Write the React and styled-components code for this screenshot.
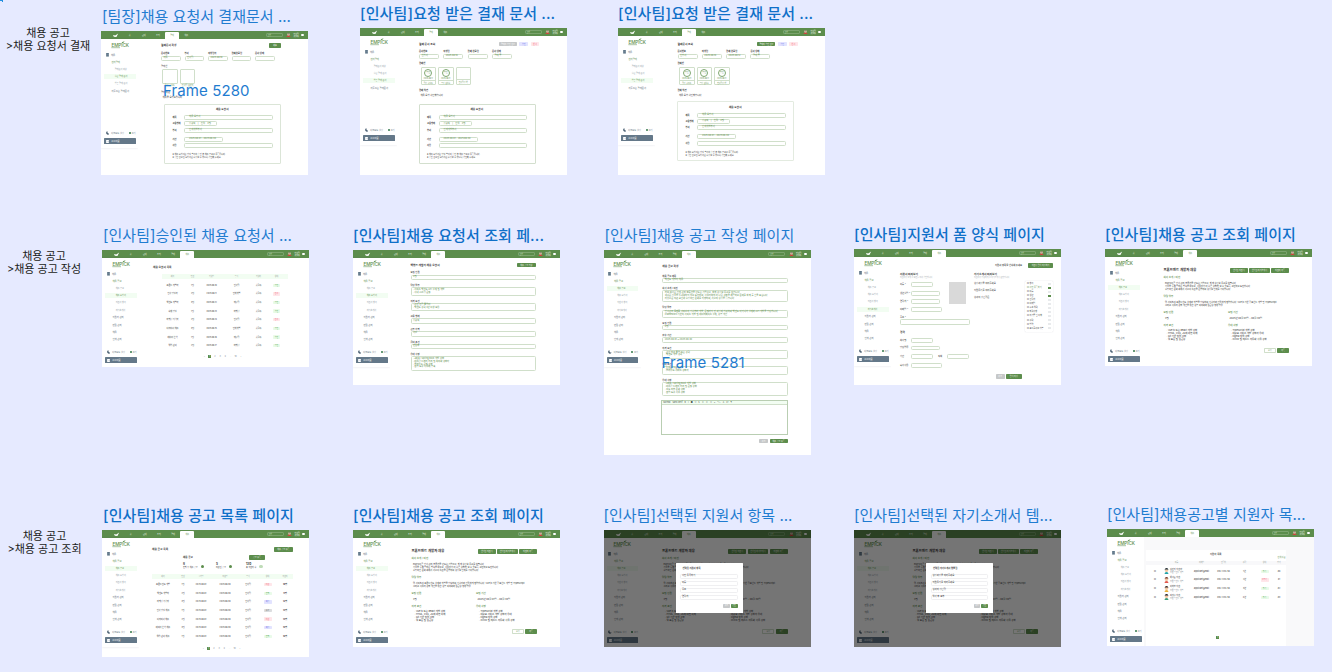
import React from "react";
import styled, { createGlobalStyle, css } from "styled-components";

const GREEN = "#5c8d4c";
const LINE = "#d0dfca";
const MINT = "#f2fdf2";

const GlobalStyle = createGlobalStyle`
  * { box-sizing: border-box; }
  html, body { margin: 0; padding: 0; }
  body { font-family: Inter, "Noto Sans CJK KR", sans-serif; overflow: hidden; -webkit-text-size-adjust: none; }
`;

/* ---------- canvas ---------- */
const Canvas = styled.main`
  position: relative;
  width: 1332px;
  height: 672px;
  background: #e6eaff;
  overflow: hidden;
`;
const Corner = styled.i`
  position: absolute;
  left: 0;
  top: 0;
  width: 3px;
  height: 2px;
  border-top: 1px solid #2490e0;
  border-right: 1px solid #2490e0;
`;
const Node = styled.section`
  position: absolute;
  left: ${(p) => p.$x}px;
  top: ${(p) => p.$y - 24}px;
  width: 207px;
`;
const NodeTitle = styled.h2`
  margin: 0;
  padding-left: ${(p) => p.$pad ?? 1}px;
  height: 24px;
  line-height: 20px;
  font-size: 15px;
  letter-spacing: ${(p) => (p.$bold ? 0.14 : 0.03)}px;
  font-weight: ${(p) => (p.$bold ? 500 : 400)};
  color: ${(p) => (p.$bold ? "#0f70c8" : "#1f7cd0")};
  white-space: nowrap;
`;
const FloatName = styled.span`
  position: absolute;
  left: ${(p) => p.$x}px;
  top: ${(p) => p.$y}px;
  font-size: 15px;
  line-height: 20px;
  letter-spacing: 0.1px;
  color: #1f7cd0;
`;
const GroupLabel = styled.p`
  position: absolute;
  margin: 0;
  left: ${(p) => p.$x}px;
  top: ${(p) => p.$y}px;
  width: 90px;
  text-align: center;
  font: 400 11px/13px Inter, "Noto Sans CJK KR", sans-serif;
  color: #1b1c20;
  white-space: nowrap;
`;

/* ---------- page shell ---------- */
const Page = styled.div`
  position: relative;
  width: 207px;
  height: ${(p) => p.$h}px;
  background: #fff;
  display: flex;
  flex-direction: column;
  overflow: hidden;
  font-size: 2.4px;
  color: #333;
  white-space: nowrap;
`;
const TopBar = styled.header`
  flex: none;
  height: 8px;
  background: ${GREEN};
  display: flex;
  align-items: center;
  padding: 0 4px 0 11px;
  color: #fff;
`;
const Tab = styled.span`
  width: 14.15px;
  height: 6.6px;
  align-self: flex-end;
  display: flex;
  align-items: center;
  justify-content: center;
  font-size: 2px;
  border-radius: 1px 1px 0 0;
  background: ${(p) => (p.$on ? "#fff" : "transparent")};
  color: ${(p) => (p.$on ? GREEN : "#eef5eb")};
`;
const Search = styled.span`
  margin-left: auto;
  width: 17px;
  height: 4px;
  border: 1px solid #7ba36d;
  border-radius: 1px;
  display: flex;
  align-items: center;
  padding-left: 1px;
  font-size: 1.8px;
  color: #cfe0c9;
`;
const UserName = styled.span`
  width: 10px;
  font-size: 2px;
  line-height: 2.2px;
  text-align: center;
`;
const Dot = styled.i`
  flex: none;
  width: ${(p) => p.$s}px;
  height: ${(p) => p.$s}px;
  border-radius: 50%;
  background: ${(p) => p.$c};
`;
const Main = styled.div`
  flex: 1;
  display: flex;
  min-height: 0;
`;
const Sidebar = styled.nav`
  flex: none;
  width: 37px;
  height: 109px;
  background: #fff;
  box-shadow: 0 0 2px rgba(60, 70, 110, 0.16);
  display: flex;
  flex-direction: column;
  padding: 2px 2.5px 0 3.2px;
`;
const Brand = styled.div`
  height: 10.4px;
  padding-left: 6.5px;
`;
const SideItem = styled.div`
  height: 7.25px;
  display: flex;
  align-items: center;
  padding-left: ${(p) => p.$pad}px;
  font-size: 2.3px;
  color: ${(p) => p.$c || "#5a6b78"};
  gap: 2px;
`;
const SubItem = styled.div`
  margin: 1.1px 0;
  height: 5px;
  display: flex;
  align-items: center;
  padding-left: 10.5px;
  font-size: 2.1px;
  color: ${(p) => (p.$on ? GREEN : "#8d98a3")};
  background: ${(p) => (p.$on ? MINT : "transparent")};
`;
const ThemeRow = styled.div`
  margin-top: auto;
  height: 5px;
  display: flex;
  align-items: center;
  gap: 2px;
  padding-left: 1.5px;
  color: #6b7b87;
  font-size: 2.2px;
`;
const Toggle = styled.span`
  margin-left: auto;
  display: flex;
  align-items: center;
  gap: 0.8px;
`;
const Logout = styled.div`
  margin: 2.7px 0 3.6px;
  height: 6px;
  background: #647889;
  border-radius: 0.6px;
  display: flex;
  align-items: center;
  gap: 2px;
  padding-left: 2px;
  color: #fff;
  font-size: 2.3px;
`;
const Content = styled.article`
  flex: 1;
  min-width: 0;
  padding: ${(p) => p.$p};
  background: ${(p) => p.$bg || "#fff"};
  display: flex;
  flex-direction: column;
`;

/* ---------- parts ---------- */
const Row = styled.div`
  flex: none;
  display: flex;
  align-items: center;
  height: ${(p) => (p.$h ? `${p.$h}px` : "auto")};
  margin-top: ${(p) => p.$mt || 0}px;
  gap: ${(p) => p.$gap || 0}px;
  padding-left: ${(p) => p.$pl || 0}px;
  justify-content: ${(p) => p.$j || "flex-start"};
`;
const Spacer = styled.i`
  flex: 1;
`;
const Text = styled.div`
  flex: none;
  font-size: ${(p) => p.$s || 2.4}px;
  line-height: ${(p) => p.$lh || 3}px;
  font-weight: ${(p) => p.$w || 400};
  color: ${(p) => p.$c || "#333"};
  width: ${(p) => (p.$width ? `${p.$width}px` : "auto")};
  margin-top: ${(p) => p.$mt || 0}px;
  padding-left: ${(p) => p.$pl || 0}px;
  text-align: ${(p) => p.$a || "left"};
`;
const tones = {
  green: css`background: ${GREEN}; color: #fff;`,
  gray: css`background: #c6c8c9; color: #fff;`,
  lilac: css`background: #e2e3ff; color: #6c70e8;`,
  pink: css`background: #ffe6ea; color: #ef6a78;`,
  mint: css`background: #e9fbe9; color: #57a552;`,
  line: css`background: #fff; color: ${GREEN}; border: 1px solid ${LINE};`,
  silver: css`background: #dcdddf; color: #555;`,
};
const Button = styled.span`
  flex: none;
  width: ${(p) => p.$width}px;
  height: ${(p) => p.$h || 4.6}px;
  border-radius: 0.7px;
  display: flex;
  align-items: center;
  justify-content: center;
  font-size: 2px;
  overflow: hidden;
  ${(p) => tones[p.$tone]}
`;
const Field = styled.div`
  flex: none;
  width: ${(p) => (p.$width ? `${p.$width}px` : "100%")};
  height: ${(p) => p.$h || 5}px;
  border: 1px solid ${(p) => p.$line || LINE};
  border-radius: 1.4px;
  padding-left: ${(p) => p.$pl ?? 1.5}px;
  display: flex;
  flex-direction: column;
  justify-content: center;
  font-size: 2.3px;
  line-height: 2.8px;
  color: ${(p) => p.$c || GREEN};
  margin-top: ${(p) => p.$mt || 0}px;
`;
const Pager = styled.div`
  margin-top: ${(p) => p.$mt}px;
  display: flex;
  justify-content: center;
  align-items: center;
  gap: 2.2px;
  height: 4px;
  font-size: 2.2px;
  color: #7b8790;
  span { width: 3px; line-height: 3.2px; text-align: center; }
  .on { background: ${GREEN}; color: #fff; }
`;

const Leaf = () => (
  <svg width="7" height="5" viewBox="0 0 7 5">
    <path d="M1 2 L1.8 3.8 L4.4 4 L6.2 .5 L4 1.9 L3.2 2.5Z" fill="#fff" />
  </svg>
);
const BrandMark = () => (
  <svg width="20" height="8" viewBox="0 0 20 8">
    <text x="0.4" y="5.7" fontSize="4.6" fontWeight="500" textLength="17.5" fill={GREEN} fontFamily="Inter">EMPICK</text>
    <path d="M10.3 2.6 Q10.8 .5 13.6 .3 Q12.8 2 10.3 2.6" fill={GREEN} />
    <path d="M0.3 6.7H9" stroke={GREEN} strokeWidth=".5" />
  </svg>
);
const Moon = () => (
  <svg width="3.6" height="3.8" viewBox="0 0 4 4">
    <path d="M1.7 0A2 2 0 1 0 4 2.7A2 2 0 0 1 1.7 0Z" fill="#506577" />
  </svg>
);
const Door = ({ c }) => (
  <svg width="3" height="3.6" viewBox="0 0 3 4">
    <path d="M0 0H3V4H0Z" fill={c} />
    <path d="M1.4 1.8H3" stroke="#8ea0b0" strokeWidth=".5" />
  </svg>
);
const Avatar = () => (
  <svg width="5" height="4.4" viewBox="0 0 5 4.4">
    <circle cx="2.5" cy="1.6" r="1.3" fill="#f0cdb8" />
    <path d="M.4 4Q.5 2.4 2.5 2.5T4.6 4Z" fill="#c9463f" />
    <path d="M1.3 1.2Q2.5 -.4 3.7 1.2Z" fill="#3b3d44" />
  </svg>
);

const SHORT = ["결재문서 작성", "올린 결재 문서", "받은 결재 문서"];
const LONG = ["채용 공고", "채용 요청서", "지원서 항목", "자기소개서"];

function Shell({ h, tab = 4, menu = "long", on, pad, bg, children, overlay }) {
  const subs = menu === "short" ? SHORT : LONG;
  const rest = menu === "short" ? ["자주쓰는 결재문서"] : ["지원자 관리", "면접 관리", "채용", "인재 관리"];
  return (
    <Page $h={h}>
      <TopBar>
        <Row $h={6}><Leaf /></Row>
        <Row $pl={3.6} $h={8}>
          {["홈", "근태", "조직", "결재", "채용"].map((t, i) => (
            <Tab key={t} $on={i === tab}>{t}</Tab>
          ))}
          {tab === 3 ? null : <Spacer />}
        </Row>
        <Search>검색</Search>
        <Row $pl={3.5}><Avatar /></Row>
        <UserName>인사팀<br />홍길동</UserName>
        <Dot $s={2.8} $c="#fff" />
      </TopBar>
      <Main>
        <Sidebar>
          <Brand><BrandMark /></Brand>
          <SideItem $pad={1.8}><Door c="#61788a" />채용</SideItem>
          <SideItem $pad={7.3} $c={GREEN}>{menu === "short" ? "전자결재" : "채용 공고"}</SideItem>
          {subs.map((s, i) => <SubItem key={s} $on={i === on}>{s}</SubItem>)}
          {rest.map((s) => <SideItem key={s} $pad={7.3}>{s}</SideItem>)}
          <ThemeRow><Moon />다크모드 설정<Toggle><Dot $s={2} $c="#33794b" />끄기</Toggle></ThemeRow>
          <Logout><Door c="#fff" />로그아웃</Logout>
        </Sidebar>
        <Content $p={pad} $bg={bg}>{children}</Content>
      </Main>
      {overlay}
    </Page>
  );
}

/* ---------- approval documents ---------- */
const Meta = styled.div`
  display: grid;
  grid-template-columns: repeat(${(p) => p.$n}, ${(p) => p.$col}px);
  margin-top: ${(p) => p.$mt}px;
`;
const Sign = styled.div`
  width: 15.5px;
  height: ${(p) => p.$h}px;
  border: 1px solid ${LINE};
  border-radius: 1px;
  display: flex;
  flex-direction: column;
  align-items: center;
  font-size: 1.9px;
  line-height: 2.6px;
  color: ${GREEN};
`;
const Stamp = styled.div`
  width: 8.4px;
  height: 8.4px;
  margin-top: 0.4px;
  border: 1px solid #7fa872;
  border-radius: 50%;
  text-align: center;
  line-height: 6.4px;
  font-size: 2.2px;
  visibility: ${(p) => (p.$show ? "visible" : "hidden")};
`;
const SignFoot = styled.div`
  margin-top: auto;
  width: 100%;
  height: 5.4px;
  border-top: 1px solid ${LINE};
  text-align: center;
  line-height: 4px;
`;
const Card = styled.div`
  width: 117px;
  height: 60px;
  margin-top: ${(p) => p.$mt}px;
  margin-left: ${(p) => p.$ml}px;
  border: 1px solid ${(p) => p.$line || "#dbe5d7"};
  border-radius: 1px;
  padding: 3.4px 8px 0 7.5px;
`;

function RequestCard({ mt, ml, line }) {
  const item = (label, value, top, width) => (
    <Row $mt={top} $h={5}>
      <Text $width={11.6} $w={600} $s={2.2}>{label}</Text>
      <Field $width={width || 88.5} $h={5} $pl={4}>{value}</Field>
    </Row>
  );
  return (
    <Card $mt={mt} $ml={ml} $line={line}>
      <Text $w={700} $s={2.6} $a="center">채용 요청서</Text>
      {item("제목", "채용 요청서", 3.8)}
      {item("고용형태", "정규직　|　신입　3명", 1.4, 33)}
      {item("부서", "인재개발부서", 1.4)}
      {item("기간", "2025.06.01 - 2025.06.30", 3.8, 39)}
      {item("사유", "", 1.5)}
      <Text $mt={5} $s={2.1} $lh={3}>※ 채용 요청서는 담당 부서의 승인 후 채용 공고로 등록됩니다.</Text>
      <Text $s={2.1} $lh={3}>※ 승인 완료된 요청서는 수정할 수 없으니 확인해 주세요.</Text>
    </Card>
  );
}

function LeaderDoc() {
  return (
    <Shell h={144} tab={3} menu="short" on={1} pad="4.4px 0 0 23px">
      <Row $h={5}>
        <Text $w={700} $s={2.7} $width={108}>결재문서 작성</Text>
        <Button $tone="green" $width={12} $h={5}>제출</Button>
      </Row>
      <Meta $n={5} $col={23.5} $mt={4.1}>
        {[["문서번호", "자동"], ["부서", "인사팀"], ["작성일자", "2025.06.10"], ["결재완료일", ""], ["문서 상태", ""]].map(([a, b]) => (
          <div key={a}>
            <Text $w={600} $s={2.3}>{a}</Text>
            <Field $width={19.5} $h={5} $mt={0.8}>{b}</Field>
          </div>
        ))}
      </Meta>
      <Text $mt={3.4} $s={2.3}>결재선</Text>
      <Row $mt={1.6} $gap={2.4} $pl={1}>
        {["팀장 홍길동", "인사팀 김민지"].map((n) => (
          <div key={n}><Sign $h={14.6} /><Text $s={2} $c={GREEN} $a="center">{n}</Text></div>
        ))}
      </Row>
      <Text $mt={4.6} $s={2.3}>결재 의견</Text>
      <Text $mt={2} $s={2.3} $pl={1.5}>채용을 요청드립니다.</Text>
      <RequestCard mt={4.4} ml={3} />
    </Shell>
  );
}

function ReceivedDoc({ dx = 0, done }) {
  return (
    <Shell h={147} tab={3} menu="short" on={2} pad={`5.5px 0 0 ${22 + dx}px`}>
      <Row $h={5} $gap={2.4}>
        <Text $w={700} $s={2.7} $width={77.5}>{done ? "결재문서 조회" : "결재 문서 조회"}</Text>
        <Button $tone={done ? "green" : "gray"} $width={18}>결재자 승인 완료</Button>
        <Button $tone="lilac" $width={9}>승인</Button>
        <Button $tone="pink" $width={8.5}>반려</Button>
      </Row>
      <Meta $n={4} $col={24.3} $mt={3.6}>
        {[["문서번호", "신청서"], ["작성일", "2025.06.10"], ["결재 완료일", done ? "2025.06.12" : ""], ["문서 상태", "결재 중"]].map(([a, b]) => (
          <div key={a}>
            <Text $w={600} $s={2.3}>{a}</Text>
            <Field $width={20} $h={5} $mt={0.9}>{b}</Field>
          </div>
        ))}
      </Meta>
      <Text $mt={3.3} $s={2.3} $w={600}>결재선</Text>
      <Row $mt={2} $gap={2} $pl={1.5}>
        {["팀장 홍길동", "부장 김철수", "인사팀장 박"].map((n, i) => (
          <Sign key={n} $h={18}>
            <Stamp $show={done || i < 2}>승인</Stamp>
            {done || i < 2 ? "2025.06.11" : ""}
            <SignFoot>{n}</SignFoot>
          </Sign>
        ))}
      </Row>
      <Text $mt={3.5} $s={2.3} $w={600}>결재 의견</Text>
      <Text $mt={2.6} $s={2.3} $pl={1.5}>채용 요청 확인했습니다.</Text>
      <RequestCard mt={done ? 4 : 6.5} ml={-0.5} line={done ? "#e3ebe0" : "#d3dfce"} />
    </Shell>
  );
}

/* ---------- tables ---------- */
const GridRow = styled.div`
  display: grid;
  grid-template-columns: ${(p) => p.$cols};
  align-items: center;
  justify-items: center;
  height: ${(p) => p.$h}px;
  background: ${(p) => p.$bg || "transparent"};
  font-size: ${(p) => (p.$bg ? 1.9 : 2.1)}px;
  color: ${(p) => (p.$bg ? "#8f9b94" : "#333")};
`;
const Status = styled(Button)`
  height: 3.4px;
  font-size: 1.9px;
`;

function Pages({ mt }) {
  return (
    <Pager $mt={mt}>
      <span>‹</span><span className="on">1</span><span>2</span><span>3</span><span>4</span><span>…</span><span>10</span><span>›</span>
    </Pager>
  );
}

function ApprovedList() {
  const cols = "22px 18px 20px 30px 14px 22px";
  const rows = ["프론트 개발자", "인사 담당자", "백엔드 개발자", "회계 담당", "마케팅 기획자", "디자이너 채용", "데이터 분석", "영업 관리"];
  return (
    <Shell h={117} on={1} pad="8px 0 0 14px">
      <Text $w={700} $s={2.7}>채용 요청서 목록</Text>
      <Row $mt={5.3} $pl={8.5}>
        <div>
          <GridRow $cols={cols} $h={5} $bg={MINT}>
            {["제목", "인원", "작성일", "부서", "작성자", "상태"].map((t) => <span key={t}>{t}</span>)}
          </GridRow>
          <Row $h={1.6} />
          {rows.map((r, i) => (
            <GridRow key={r} $cols={cols} $h={8.65}>
              <span>{r}</span><span>{(i % 3) + 1}명</span><span>2025.06.1{i}</span>
              <span>{["인사팀", "인재개발", "재무팀", "마케팅"][i % 4]}</span><span>홍길동</span>
              <Status $width={7} $tone={i === 1 || i === 4 ? "pink" : "mint"}>{i === 1 || i === 4 ? "반려" : "승인"}</Status>
            </GridRow>
          ))}
        </div>
      </Row>
      <Row $pl={50}><Pages mt={4.5} /></Row>
    </Shell>
  );
}

const StatBlock = styled.div`
  width: ${(p) => p.$width}px;
  display: flex;
  align-items: center;
  gap: 3px;
`;

function PostingList() {
  const cols = "22px 18px 18px 30px 16px 23px 12px";
  const rows = ["프론트엔드 개발", "백엔드 개발자", "마케팅 기획자", "인사 담당 채용", "디자이너 채용", "데이터 분석 채용", "영업 관리 채용"];
  const st = [["pink", "마감"], ["mint", "진행"], ["lilac", "예정"], ["silver", "종료"], ["pink", "마감"], ["lilac", "예정"], ["mint", "진행"]];
  return (
    <Shell h={127} on={0} pad="9.3px 16px 0 13px">
      <Row $h={4.6}><Text $w={700} $s={2.7}>채용 공고 목록</Text><Spacer /><Button $tone="green" $width={19.5}>채용 공고 등록</Button></Row>
      <Row $mt={3.5} $h={4.6} $pl={31}><Text $w={700} $s={2.5} $width={66}>채용 공고</Text><Button $tone="green" $width={16}>공고 등록</Button></Row>
      <Row $mt={3} $h={7} $pl={31}>
        {[["8", "진행 중 채용 공고", 33], ["5", "마감된 공고", 30], ["120", "총 지원자 수", 31]].map(([n, t, w], i) => (
          <StatBlock key={t} $width={w}>
            <div><Text $w={700} $s={3}>{n}</Text><Text $s={2}>{t}</Text></div>
            <Dot $s={3.2} $c={i === 2 ? "#bfdcb8" : GREEN} />
          </StatBlock>
        ))}
      </Row>
      <Row $h={3.8} />
      <GridRow $cols={cols} $h={5} $bg={MINT}>
        {["제목", "인원", "시작일", "마감일", "부서", "상태", "지원자"].map((t) => <span key={t}>{t}</span>)}
      </GridRow>
      <Row $h={1.6} />
      {rows.map((r, i) => (
        <GridRow key={r} $cols={cols} $h={8.6}>
          <span>{r}</span><span>{(i % 3) + 1}명</span><span>2025.06.01</span><span>2025.06.30</span><span>인사팀</span>
          <Status $width={8} $tone={st[i][0]}>{st[i][1]}</Status><b>{10 + i}명</b>
        </GridRow>
      ))}
      <Row $pl={50}><Pages mt={6} /></Row>
    </Shell>
  );
}

/* ---------- forms ---------- */
const Editor = styled.div`
  margin: 4px -0.5px 0 -1px;
  height: 35.5px;
  border: 1px solid #b9ceb2;
`;
const EditorTools = styled.div`
  height: 4px;
  background: ${MINT};
  border-bottom: 1px solid ${LINE};
  font-size: 2.1px;
  line-height: 3.2px;
  padding-left: 1px;
  color: #4d5a50;
`;

const Group = ({ label, h, lines }) => (
  <>
    <Text $mt={4} $lh={3.2} $s={2.3} $w={500}>{label}</Text>
    <Field $h={h}>{lines.map((l) => <span key={l}>{l}</span>)}</Field>
  </>
);

function RequestView() {
  return (
    <Shell h={135} on={1} pad="4.8px 24px 0 20.5px">
      <Row $h={4.6}><Text $w={700} $s={2.7}>백엔드 개발자 채용 요청서</Text><Spacer /><Button $tone="green" $width={19.5}>채용 공고 작성</Button></Row>
      {[
        ["모집 인원", 5.6, ["3명"]],
        ["담당 업무", 8.7, ["· 서비스 백엔드 API 설계 및 개발", "· 사내 시스템 운영"]],
        ["자격 요건", 8, ["· 관련 전공 졸업자", "· 백엔드 경력 3년 이상 보유"]],
        ["고용 형태", 5.4, ["정규직"]],
        ["근무 지역", 5.5, ["서울"]],
        ["급여 조건", 5.4, ["면접후"]],
        ["우대 사항", 14.6, ["· Java / Spring Boot 개발 경험", "· 대용량 트래픽 처리 및 최적화 경험자", "· 클라우드 운영 경험", "· 협업 도구 사용에 능숙"]],
      ].map(([a, b, c]) => <Group key={a} label={a} h={b} lines={c} />)}
    </Shell>
  );
}

function PostingForm() {
  return (
    <Shell h={204.5} on={0} pad="6px 23px 0 21.8px">
      <Text $w={700} $s={2.7} $lh={4}>채용 공고 작성</Text>
      <Row $h={2.5} />
      {[
        ["채용 공고 제목", 5.4, ["백엔드 개발자 채용"]],
        ["회사 소개 / 비전", 12, ["저희 회사는 인재 관리 솔루션을 만드는 기업으로, 함께 성장할 동료를 찾습니다.", "새로운 기술을 두려워하지 않고 도전하며, 사용자에게 더 나은 경험을 제공하고 문제를 함께 풀 분을 모십니다.", "자유로운 의견 교환과 수평적인 문화를 지향하며, 서로의 성장을 돕습니다."]],
        ["담당 업무", 8.2, ["인사관리 플랫폼 서비스의 기획부터 개발, 운영까지 전 과정에 참여하며 백엔드 아키텍처 설계와 API 개발을 담당합니다.", "Framework 기반의 서비스 개발 및 데이터베이스 설계, 성능 개선"]],
        ["모집 인원", 5.2, ["3명"]],
        ["접수 기간", 5.4, ["2025.06.01 ~ 2025.06.30"]],
        ["자격 요건", 9, ["· 관련 학과 졸업 또는 경력", "· 백엔드 개발 경력"]],
        ["우대 조건", 8.6, ["· 컴퓨터 공학 전공", "· 클라우드 서비스 경험자"]],
        ["우대 사항", 14, ["· Java / Spring Boot 개발 경험", "· 대용량 트래픽 처리 및 운영 경험", "· 코드 리뷰 문화 경험", "· 협업 도구 사용 경험"]],
      ].map(([a, b, c]) => <Group key={a} label={a} h={b} lines={c} />)}
      <Editor><EditorTools>Normal　Sans Serif　B　I　■　U　S　≡　≡　≡　❝　&lt;/&gt;　A　x²　¶</EditorTools></Editor>
      <Row $mt={3.5} $gap={1.3} $j="flex-end"><Button $tone="gray" $width={9.5}>취소</Button><Button $tone="green" $width={17.8}>채용 공고 등록</Button></Row>
    </Shell>
  );
}

const Columns = styled.div`
  display: flex;
  height: ${(p) => p.$h}px;
`;
const Column = styled.div`
  flex: none;
  width: ${(p) => p.$w}px;
`;
const Photo = styled.div`
  width: 17px;
  height: 22px;
  margin: 14.8px 0 0 9px;
  background: #d9d9d9;
`;
const Picker = styled.div`
  width: 27.5px;
  height: 51px;
  margin-top: 13px;
  padding: 1px 2px;
  border-radius: 1px;
  box-shadow: 0 0 1px rgba(90, 100, 120, 0.35);
`;
const Check = styled.i`
  width: 2.2px;
  height: 2.2px;
  background: ${(p) => (p.$on ? GREEN : "#e8eaec")};
`;

const Input = ({ label, w, mt = 3.3, children }) => (
  <Row $h={5} $mt={mt}><Text $s={2.3} $width={11}>{label}</Text><Field $width={w} $h={4.8} />{children}</Row>
);

function ApplyForm() {
  return (
    <Shell h={136} on={3} pad="6px 0 0 9px">
      <Row $h={4.6} $pl={95} $gap={3.5}><Text $s={2.3} $width={29.5} $w={500}>지원서 항목을 선택해 주세요.</Text><Button $tone="green" $width={25}>지원서 양식 저장하기</Button></Row>
      <Columns $h={106.5}>
        <Column $w={40}>
          <Text $mt={5.5} $w={700} $s={2.7}>지원서 미리보기</Text>
          <Text $s={1.9} $c="#a5abb0">지원자가 보게 될 화면을 미리 확인합니다</Text>
          <Input label="이름 *" w={22} mt={3.3} />
          <Input label="생년월일 *" w={28.5} />
          <Input label="연락처 *" w={28.5} />
          <Input label="이메일 *" w={30.5} />
          <Text $mt={3.4} $s={2.3}>주소 *</Text>
          <Field $width={70} $h={5.6} $mt={0.8} />
          <Text $mt={6} $w={700} $s={2.6}>경력</Text>
          <Input label="회사명" w={22} mt={3.6} />
          <Input label="담당업무" w={28.5} mt={2.8} />
          <Input label="기간" w={22} mt={3.4}><Text $s={2.3} $pl={5} $width={14}>직책</Text><Field $width={22} $h={4.8} /></Input>
          <Input label="퇴사사유" w={30.5} mt={3.8} />
        </Column>
        <Column $w={34}><Photo /></Column>
        <Column $w={51}>
          <Text $mt={5.5} $w={700} $s={2.7}>자기소개서 미리보기</Text>
          <Text $s={1.9} $c="#a5abb0">지원자가 작성하게 될 자기소개서 문항입니다</Text>
          <Text $mt={3} $s={2.3}>성장과정을 적어주세요</Text>
          <Text $mt={3.8} $s={2.3}>지원동기를 적어주세요</Text>
          <Text $mt={3.8} $s={2.3}>성격의 장단점은</Text>
        </Column>
        <Column $w={28}>
          <Picker>
            {["항목", "사진 등록하기", "이름", "생년", "연락처", "이메일", "주소 입력", "학력사항", "자격증 및 어학", "경력", "병역", "포트폴리오 첨부"].map((t, i) => (
              <Row key={t} $h={4.05}><Text $s={2.1} $c={i === 1 ? GREEN : "#444"}>□ {t}</Text><Spacer /><Check $on={i === 1 || i === 3} /></Row>
            ))}
          </Picker>
        </Column>
      </Columns>
      <Row $gap={1} $pl={95.5} $mt={0.4}><Button $tone="gray" $width={9.3}>취소</Button><Button $tone="green" $width={16}>양식 저장</Button></Row>
    </Shell>
  );
}

/* ---------- posting detail ---------- */
const Head = (p) => <Text $s={2.5} $c={GREEN} $w={500} {...p} />;

function Posting({ overlay }) {
  return (
    <Shell h={117} on={0} pad="11.3px 23px 0 21.5px" overlay={overlay}>
      <Row $h={4.8} $gap={1.4}>
        <Text $w={700} $s={3.4}>프론트엔드 개발자 채용</Text><Spacer />
        <Button $tone="green" $width={18}>선택된 지원서</Button><Button $tone="green" $width={20.5}>선택된 자기소개서</Button><Button $tone="green" $width={18}>지원자 목록</Button>
      </Row>
      <Head $mt={3.2}>회사 소개 / 비전</Head>
      <Text $mt={2.6} $pl={1.5} $s={2.2}>EMPICK은 인사 관리 솔루션을 만드는 기업으로, 함께 성장할 동료를 찾습니다.</Text>
      <Text $pl={1.5} $s={2.2}>기술을 통해 일하는 방식을 바꾸고, 사용자가 더 나은 경험을 할 수 있도록 고민하고 도전합니다.</Text>
      <Text $pl={1.5} $s={2.2}>수평적인 문화 속에서 서로의 의견을 존중하며 성장할 인재를 기다립니다.</Text>
      <Head $mt={4.3}>담당 업무</Head>
      <Text $mt={2.4} $pl={1.5} $s={2.2}>웹 서비스의 프론트엔드 설계와 개발을 담당하며 기획자와 긴밀하게 협업합니다. Vue.js 기반 컴포넌트 개발 및 TypeScript</Text>
      <Text $pl={1.5} $s={2.2}>그리고 사용자 경험 개선을 위한 성능 최적화와 접근성 향상 업무</Text>
      <Row $mt={4.6}>
        <Column $w={64.5}><Head>모집 인원</Head><Text $mt={2.5} $pl={1.5}>3명</Text></Column>
        <Column $w={60}><Head>모집 기간</Head><Text $mt={2.5} $pl={1.5}>2025년 06월 01일 - 06월 30일</Text></Column>
      </Row>
      <Row $mt={4.7}>
        <Column $w={64.5}><Head>자격 요건</Head><Row $h={2.6} />
          {["Vue.js 또는 React 개발 경험", "HTML, CSS, JS에 대한 이해", "Git 기반 협업 경험", "웹 표준 및 접근성"].map((t) => <Text key={t} $pl={3} $lh={2.9}>· {t}</Text>)}
        </Column>
        <Column $w={60}><Head>우대 사항</Head><Row $h={2.6} />
          {["TypeScript 개발 경험", "대규모 서비스 개발 경험자 우대", "Figma 협업 경험", "CI/CD 및 테스트 자동화 사용 경험"].map((t) => <Text key={t} $pl={3} $lh={2.9}>· {t}</Text>)}
        </Column>
      </Row>
      <Row $mt={6.3} $gap={1.3} $j="flex-end"><Button $tone="line" $width={11.8} $h={5}>수정</Button><Button $tone="green" $width={12} $h={5}>목록</Button></Row>
    </Shell>
  );
}

const Dim = styled.div`
  position: absolute;
  inset: 0;
  background: rgba(0, 0, 0, 0.54);
`;
const Modal = styled.div`
  position: absolute;
  left: 72px;
  top: 33px;
  width: 67px;
  height: 50px;
  background: #fff;
  padding: 4px 5px 0 4.5px;
  border-radius: 0.5px;
`;
const ModalDialog = ({ title, items }) => (
  <>
    <Dim />
    <Modal>
      <Text $w={700} $s={2.3} $pl={2.5}>{title}</Text>
      <Row $h={2.3} />
      {items.map((t) => <Field key={t} $h={5} $mt={2} $line="#efeff1" $c="#333" $pl={1}>{t}</Field>)}
      <Row $mt={3.4} $gap={1} $j="flex-end"><Button $tone="gray" $width={6.3} $h={4.2}>취소</Button><Button $tone="green" $width={6.8} $h={4.2}>확인</Button></Row>
    </Modal>
  </>
);

/* ---------- applicants ---------- */
const Panel = styled.div`
  width: 139.5px;
  height: 97px;
  background: #fff;
  padding-top: 2.5px;
`;
const Person = styled.div`
  justify-self: start;
  display: flex;
  align-items: center;
  gap: 1px;
  line-height: 2.7px;
  small { display: block; font-size: 2px; color: #8a939b; }
`;
const Face = ({ hair, shirt }) => (
  <svg width="5" height="6" viewBox="0.5 0.4 4 5.4">
    <circle cx="2.5" cy="2.6" r="1.4" fill="#f2c7a2" />
    <path d="M.8 2.4Q1 .4 2.6 .5T4.2 2.4L3.4 1.7H1.6Z" fill={hair} />
    <path d="M.7 5.8Q.8 4 2.5 4T4.3 5.8Z" fill={shirt} />
  </svg>
);

function Applicants() {
  const cols = "18px 25px 25px 19px 23px 17px 12px";
  const rows = [
    ["김민지 지원자", "#26323a", "#23a3a8"], ["박서준 지원", "#7a3b2b", "#e2574c"],
    ["이하늘 지원", "#3a2a26", "#e9b13a"], ["최지우 지원", "#28252b", "#3f9e7b"],
  ];
  return (
    <Shell h={117} pad="13px 0 0 2px" bg="#f9f9fa">
      <Panel>
        <Text $a="center" $s={2.4} $w={500}>지원자 목록</Text>
        <Row $h={3.2} $j="flex-end"><Text $s={2} $c={GREEN}>전체 다운</Text></Row>
        <Row $h={2} />
        <GridRow $cols={cols} $h={4.6} $bg="#f8f8fa">
          <span /><span>이름</span><span>이메일</span><span>연락처</span><span>경력</span><span>상태</span><span>평가</span>
        </GridRow>
        <Row $h={1.6} />
        {rows.map(([n, hair, shirt], i) => (
          <GridRow key={n} $cols={cols} $h={8.7}>
            <span>□</span>
            <Person><Face hair={hair} shirt={shirt} /><div>{n}<small>프론트엔드 개발</small></div></Person>
            <span>applicant@mail</span><span>010-1234-56</span><span>{i + 1}년</span>
            <Status $width={8} $tone={i === 1 ? "pink" : "mint"}>{i === 1 ? "불합격" : "합격"}</Status><span>{80 + i}</span>
          </GridRow>
        ))}
        <Row $pl={4} $j="center"><Pager $mt={33.5}><span className="on">1</span></Pager></Row>
      </Panel>
    </Shell>
  );
}

const NODES = [
  { x: 101, y: 31, pad: 1, title: "[팀장]채용 요청서 결재문서 ...", el: <LeaderDoc /> },
  { x: 360, y: 28, pad: 0, bold: true, title: "[인사팀]요청 받은 결재 문서 ...", el: <ReceivedDoc /> },
  { x: 618, y: 28, pad: 0, bold: true, title: "[인사팀]요청 받은 결재 문서 ...", el: <ReceivedDoc dx={0.5} done /> },
  { x: 102, y: 250, title: "[인사팀]승인된 채용 요청서 ...", el: <ApprovedList /> },
  { x: 353, y: 250, pad: 0, bold: true, title: "[인사팀]채용 요청서 조회 페...", el: <RequestView /> },
  { x: 603.5, y: 250, title: "[인사팀]채용 공고 작성 페이지", el: <PostingForm /> },
  { x: 854, y: 249, pad: 0, bold: true, title: "[인사팀]지원서 폼 양식 페이지", el: <ApplyForm /> },
  { x: 1105, y: 249, pad: 0, bold: true, title: "[인사팀]채용 공고 조회 페이지", el: <Posting /> },
  { x: 102, y: 530, bold: true, title: "[인사팀]채용 공고 목록 페이지", el: <PostingList /> },
  { x: 353, y: 530, pad: 0, bold: true, title: "[인사팀]채용 공고 조회 페이지", el: <Posting /> },
  { x: 603.5, y: 530, pad: 0, title: "[인사팀]선택된 지원서 항목 ...", el: <Posting overlay={<ModalDialog title="선택된 지원서 항목" items={["사진 등록하기", "이름", "주소", "연락처"]} />} /> },
  { x: 854, y: 530, pad: 0, title: "[인사팀]선택된 자기소개서 템...", el: <Posting overlay={<ModalDialog title="선택된 자기소개서 템플릿" items={["성장과정을 적어주세요", "지원동기를 적어주세요", "성격의 장단점", "입사 후 포부"]} />} /> },
  { x: 1107, y: 529, pad: 0, title: "[인사팀]채용공고별 지원자 목...", el: <Applicants /> },
];

export default function App() {
  return (
    <>
      <GlobalStyle />
      <Canvas>
        <Corner />
        <GroupLabel $x={3} $y={27}>채용 공고<br />&gt;채용 요청서 결재</GroupLabel>
        <GroupLabel $x={-1} $y={250}>채용 공고<br />&gt;채용 공고 작성</GroupLabel>
        <GroupLabel $x={-0.5} $y={530}>채용 공고<br />&gt;채용 공고 조회</GroupLabel>
        {NODES.map((n) => (
          <Node key={`${n.x}-${n.y}`} $x={n.x} $y={n.y}>
            <NodeTitle $bold={n.bold} $pad={n.pad}>{n.title}</NodeTitle>
            {n.el}
          </Node>
        ))}
        <FloatName $x={163} $y={81}>Frame 5280</FloatName>
        <FloatName $x={661.5} $y={353}>Frame 5281</FloatName>
      </Canvas>
    </>
  );
}
